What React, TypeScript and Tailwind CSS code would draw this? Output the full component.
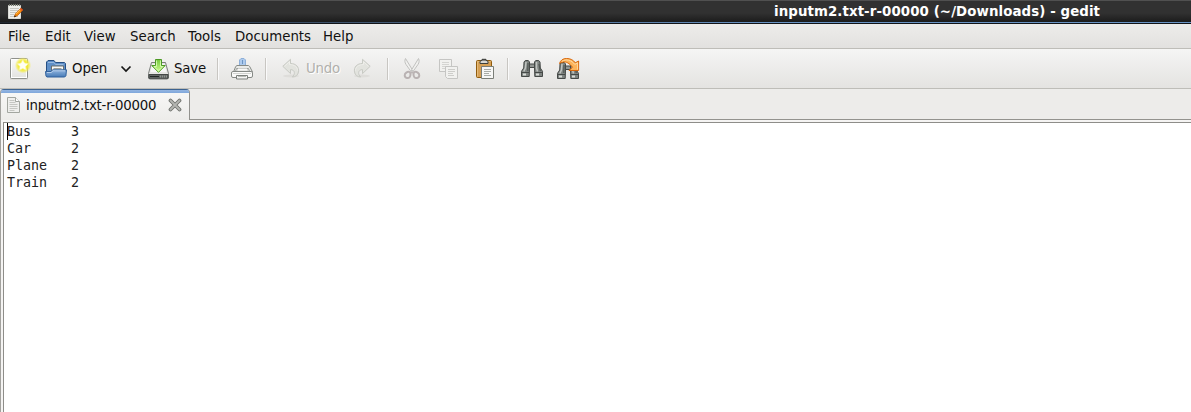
import type { ReactNode } from "react";

const rows = [
  ["Bus", "3"],
  ["Car", "2"],
  ["Plane", "2"],
  ["Train", "2"],
];

function Icon({ x, y = 56, children }: { x: number; y?: number; children: ReactNode }) {
  return (
    <svg className="block h-6 w-6 shrink-0" viewBox={`${x} ${y} 24 24`} fill="none" aria-hidden="true">
      {children}
    </svg>
  );
}

function Separator() {
  return <div className="mt-[2px] h-[22px] w-[2px] shrink-0 border-l border-[#c8c6c2] bg-[#fafafa]" />;
}

function NewIcon() {
  return (
    <Icon x={8}>
      <defs>
        <radialGradient id="glow">
          <stop offset="0.5" stopColor="#f4ec28" />
          <stop offset="0.75" stopColor="#f4ec4a" stopOpacity="0.7" />
          <stop offset="1" stopColor="#f7f080" stopOpacity="0" />
        </radialGradient>
        <linearGradient id="sheet" x2="0" y2="1">
          <stop stopColor="#fbfbfa" />
          <stop offset="1" stopColor="#e2e2df" />
        </linearGradient>
      </defs>
      <path d="M10 79h18" stroke="#cfcdca" />
      <rect x="10.5" y="58.5" width="17" height="20" rx="1" fill="url(#sheet)" stroke="#8f918c" />
      <rect x="11.5" y="59.5" width="15" height="18" stroke="#fff" />
      <circle cx="23" cy="65.3" r="8.3" fill="url(#glow)" />
      <path d="m22.8 59.8 1.8 3.2 3.7.7-2.6 2.7.4 3.7-3.3-1.5-3.4 1.5.5-3.7-2.6-2.7 3.7-.7z" fill="#fffff2" stroke="#f8f4a0" strokeWidth=".7" />
    </Icon>
  );
}

function OpenIcon() {
  return (
    <Icon x={44}>
      <defs>
        <linearGradient id="folder" x2="0" y2="1">
          <stop stopColor="#92b5df" />
          <stop offset="1" stopColor="#477bb7" />
        </linearGradient>
      </defs>
      <path d="M46.5 75V62l1.5-1.5h6l1.5 2h9l1 1V75z" fill="#5f8fc7" stroke="#264f83" />
      <path d="M48 62.5h6l1.5 2h8" stroke="#98b9e0" />
      <path d="M51.5 73v-7h12v7" fill="#f8f8f6" stroke="#6b6e6b" />
      <path d="M53.5 68.5h8M53.5 70.5h8" stroke="#9b9e9b" />
      <path d="M45.5 71.5H51l1.5-1.7h14l-.6 6-1.2 1.2H47l-1-.8z" fill="url(#folder)" stroke="#30619c" />
      <path d="M47 72.5h4.5l1.5-1.7h12" stroke="#b4cdeb" />
    </Icon>
  );
}

function SaveIcon() {
  return (
    <Icon x={146}>
      <defs>
        <linearGradient id="arrow" x2="0" y2="1">
          <stop stopColor="#73c63b" />
          <stop offset="1" stopColor="#d1ff91" />
        </linearGradient>
      </defs>
      <path d="m151.5 62.5-3 11v4.5l1 1h18l1-1v-4.5l-3-11z" fill="#e6e6e4" stroke="#7b7e7b" />
      <path d="M152.5 64h12l2 8h-16z" fill="#f7f7f6" />
      <path d="M149 74.5h19v3.8h-19z" fill="#656967" stroke="#444846" />
      <path d="M150 76.5h9" stroke="#222725" />
      <path d="M160.5 75.5v2m2-2v2m2-2v2m2-2v2" stroke="#a4a8a3" strokeWidth=".7" />
      <path d="M155.5 59.5h6v6h3.7l-6.7 6.8-6.8-6.8h3.8z" fill="url(#arrow)" stroke="#4c9924" />
      <path d="M156.5 60.5v6h-2.5l4.5 4.4 4.4-4.4h-2.4v-6" stroke="#e0ffc0" strokeWidth=".8" />
    </Icon>
  );
}

function PrintIcon() {
  return (
    <Icon x={230}>
      <path d="M239.5 66v-6l1.5-1.5h3l1.5 1.5v6z" fill="#adcaed" stroke="#8dafd8" />
      <path d="M242.5 60v4" stroke="#6c95c5" />
      <path d="m233.5 72 2.2-5.5 1.3-1h11.5l1.2 1 2.8 5.5" fill="#e9eae8" stroke="#858985" />
      <path d="M236.5 68.5h12l1.5 4h-15z" fill="#d9dbd8" stroke="#9ea19e" />
      <path d="M238 69.5h9" stroke="#f9f9f8" strokeWidth="2" />
      <rect x="231.5" y="71.5" width="21" height="6" rx="1.5" fill="#fafaf9" stroke="#858985" />
      <path d="M233 73.5h18" stroke="#d2d4d1" />
      <path d="M236.5 75.5h11v3.5h-11z" fill="#f4f4f3" stroke="#7d817d" />
      <path d="M238 76.5h8" stroke="#bcbfba" />
    </Icon>
  );
}

function CurvedArrow({ redo = false }: { redo?: boolean }) {
  return (
    <Icon x={279}>
      <g transform={redo ? "matrix(-1 0 0 1 582 0)" : undefined}>
        <ellipse cx="291" cy="76" rx="8" ry="1.5" fill="#deddda" />
        <path d="m282.8 66.3 7.7-7v4.2c5.5 0 8.8 3.5 8 8.4-.5 3.1-2.8 5-6.2 5.1 3-2.3 3-7.4-1.8-7.4v4z" fill="#e2e3de" stroke="#c8cac4" />
        <path d="m284.5 66.3 5-4.7v3c5 0 8 2.5 8 6" stroke="#eeeeea" />
      </g>
    </Icon>
  );
}

function CutIcon() {
  return (
    <Icon x={400}>
      <path d="M405.5 58.5c-1 2-.7 4 .4 5.8l5.1 7.2 1.2-2z" fill="#f1f1ef" stroke="#c1c1bf" />
      <path d="M418.5 58.5c1 2 .7 4-.4 5.8l-5.1 7.2-1.2-2z" fill="#f1f1ef" stroke="#c1c1bf" />
      <path d="M406.5 72.5c1.8-1.5 4-.8 4 1.8 0 2.7-1.5 4.2-3.6 3.7-2.8-.6-2.9-4.2-.4-5.5zM417.5 72.5c-1.8-1.5-4-.8-4 1.8 0 2.7 1.5 4.2 3.6 3.7 2.8-.6 2.9-4.2.4-5.5z" stroke="#b9b2b2" strokeWidth="2" />
      <path d="M410 72.5h4" stroke="#bcb6b6" strokeWidth="2" />
    </Icon>
  );
}

function CopyIcon() {
  return (
    <Icon x={436}>
      <path d="M439.5 59.5h12v12h-12z" fill="#f1f1ef" stroke="#c5c5c3" />
      <path d="M442 62.5h7m-7 2h7m-7 2h6m-6 2h5" stroke="#d4d4d1" />
      <path d="M445.5 66.5h12v12h-10l-2-2z" fill="#f1f1ef" stroke="#c5c5c3" />
      <path d="M448 69.5h7m-7 2h7m-7 2h5m-5 2h6" stroke="#cdcdca" />
    </Icon>
  );
}

function PasteIcon() {
  return (
    <Icon x={473}>
      <rect x="476.5" y="60.5" width="15" height="17" rx="1" fill="#d6a055" stroke="#915c0d" />
      <path d="M477.5 76.5v-15h13" stroke="#e4ba78" />
      <path d="M480 63.5v-2.2l2-1v-1h4v1l2 1v2.2z" fill="#d7d8d3" stroke="#3e403b" />
      <path d="M482 60h4" stroke="#333" />
      <path d="M481.5 66.5h12v12h-12z" fill="#f7f7f6" stroke="#7a7e77" />
      <path d="M484 69.5h7m-7 2h7m-7 2h5m-5 2h7" stroke="#a9aca7" />
    </Icon>
  );
}

function Binoculars() {
  return (
    <g>
      <path d="m524 62 1.3-1.5h3l1.2 1.5v6l-.3 8.5h-7.7v-5.2l2.2-3.3z" fill="#7f8481" stroke="#454947" />
      <path d="m540 62-1.3-1.5h-3l-1.2 1.5v6l.3 8.5h7.7v-5.2l-2.2-3.3z" fill="#7f8481" stroke="#454947" />
      <path d="M529.5 64h5v3.5h-5z" fill="#929693" stroke="#454947" />
      <path d="m526 62-.6 6-1.6 3.5M536.5 62v6l1 3.5" stroke="#c0c4c1" strokeWidth="1.5" />
      <path d="m528 63-.2 8M539 64l1.3 7" stroke="#505653" strokeWidth="1.2" />
      <path d="M522 72.5h7M535 72.5h7" stroke="#454947" />
      <path d="M523 74.5h3M536 74.5h3" stroke="#d8dbd8" strokeWidth="2" />
    </g>
  );
}

function FindIcon() {
  return <Icon x={520}><Binoculars /></Icon>;
}

function ReplaceIcon() {
  return (
    <Icon x={556}>
      <g transform="translate(36 2)"><Binoculars /></g>
      <path d="M559.5 63.5c1-3.3 3.5-5 7-5 4.3 0 6.8 1.6 8.8 4.3l3.3-1.8v9.5h-9.7l3.6-3.2c-3-4.2-6.5-5.7-9-5.3-1.6.2-3 .7-4 1.5z" fill="#fdb45b" stroke="#d96608" />
      <path d="M562 61.3c4-2.7 9.6-1.2 12.8 3.2l2.8-1.7v6.7" stroke="#ffd9a0" />
    </Icon>
  );
}

function EditorIcon() {
  return (
    <svg className="mt-1 block h-4 w-4 shrink-0" viewBox="8 4 16 16" fill="none" aria-hidden="true">
      <path d="M8.5 5.5h12v13h-12z" fill="#efefec" stroke="#dadbd5" />
      <path d="M9.5 4v2m2-2v2m2-2v2m2-2v2m2-2v2m2-2v2" stroke="#777b72" />
      <path d="M10 8.5h9m-9 2h8m-8 2h6m-6 2h4m-4 2h8" stroke="#c6c7c2" />
      <path d="m14.2 17 1.2-3.3 5.4-5.4 2 1.8-5.4 5.6z" fill="#f58b08" stroke="#ba560a" strokeWidth=".7" />
      <path d="m16 13.9 4.7-4.7" stroke="#ffc65b" />
      <path d="m20.3 8.6 2 1.8" stroke="#e65320" strokeWidth="1.7" />
      <path d="m14 17.2.8-2 1.3 1.2z" fill="#292010" />
    </svg>
  );
}

export default function App() {
  return (
    <div className="flex h-[412px] w-[1191px] flex-col overflow-hidden bg-[#edecea] font-['DejaVu_Sans',sans-serif] text-[13.333px] leading-4 text-[#111]">
      <header className="flex h-6 shrink-0 flex-col bg-linear-to-b from-[#313131] from-55% to-[#171717]">
        <div className="flex h-[22px] border-t border-[#505050] pl-2">
          <div className="-mt-px w-[766px]"><EditorIcon /></div>
          <h1 className="mt-[3px] whitespace-nowrap font-bold tracking-[0.1px] text-white">inputm2.txt-r-00000 (~/Downloads) - gedit</h1>
        </div>
        <div className="h-px bg-linear-to-r from-[#20262e] to-[#6893c5] to-65%" />
        <div className="h-px bg-[#111418]" />
      </header>

      <nav className="flex h-[25px] shrink-0 border-b border-[#bebdb8] bg-linear-to-b from-[#edecea] to-[#e2e1df] pl-2 pt-[5px]">
        <span className="w-[37px]">File</span>
        <span className="w-[39px]">Edit</span>
        <span className="w-[46px]">View</span>
        <span className="w-[58px]">Search</span>
        <span className="w-[47px]">Tools</span>
        <span className="w-[88px]">Documents</span>
        <span>Help</span>
      </nav>

      <div className="flex h-10 shrink-0 items-center border-b border-[#bebdb8] bg-linear-to-b from-[#f5f5f4] to-[#e4e3e1] pb-px pl-2 whitespace-nowrap">
        <div className="w-9"><NewIcon /></div>
        <div className="flex w-[76px] items-center gap-1"><OpenIcon /><span className="pt-[2px] tracking-[-0.1px]">Open</span></div>
        <svg className="mt-[2px] mr-[14px] h-3 w-3 shrink-0" viewBox="0 0 12 12" fill="none" aria-hidden="true">
          <path d="m1.5 3.5 4.5 4.5 4.5-4.5" stroke="#171717" strokeWidth="1.7" />
        </svg>
        <div className="flex w-[71px] items-center gap-1"><SaveIcon /><span className="pt-[2px] tracking-[-0.2px]">Save</span></div>
        <Separator />
        <div className="ml-[11px] w-[35px]"><PrintIcon /></div>
        <Separator />
        <div className="ml-3 flex w-[71px] items-center gap-[3px]">
          <CurvedArrow />
          <span className="pt-[2px] tracking-[-0.2px] text-[#b1b0ac] [text-shadow:1px_1px_0_#fff]">Undo</span>
        </div>
        <div className="w-[37px]"><CurvedArrow redo /></div>
        <Separator />
        <div className="ml-[11px] flex w-[107px] gap-3">
          <CutIcon />
          <CopyIcon />
          <div className="ml-px"><PasteIcon /></div>
        </div>
        <Separator />
        <div className="ml-[11px] flex gap-3"><FindIcon /><ReplaceIcon /></div>
      </div>

      <main className="flex min-h-0 flex-1 flex-col">
        <div className="flex h-[31px] shrink-0 items-end">
          <div className="flex h-[31px] w-[190px] shrink-0 flex-col rounded-t-[4px] border-t border-r border-l border-t-[#3d628f] border-r-[#93928e] border-l-[#a3a29e] bg-linear-to-b from-[#f8f8f7] to-[#edecea]">
            <div className="h-[3px] shrink-0 rounded-t-[2px] bg-linear-to-b from-[#94b5e0] to-[#7fa7dc]" />
            <div className="flex items-start pl-[6px] pt-[4px]">
              <svg className="mr-[5px] h-4 w-[14px] shrink-0" viewBox="0 0 14 16" fill="none" aria-hidden="true">
                <path d="M.5.5h8l4 4v11H.5z" fill="#efefed" stroke="#a3a6a0" />
                <path d="M8.5.5v4h4" fill="#fff" stroke="#a3a6a0" />
                <path d="M2.5 3.5h5m-5 2h6m-6 2h8m-8 2h8m-8 2h8m-8 2h5" stroke="#c5c6c2" />
              </svg>
              <span className="mt-px w-[142px] whitespace-nowrap tracking-[-0.25px]">inputm2.txt-r-00000</span>
              <svg className="mt-px h-[14px] w-[14px] shrink-0" viewBox="0 0 14 14" fill="none" aria-hidden="true">
                <path d="m2.5 2.5 9 9m0-9-9 9" stroke="#6f716d" strokeWidth="3.7" strokeLinecap="round" />
                <path d="m2.5 2.5 9 9m0-9-9 9" stroke="#b4b6b2" strokeWidth="1.8" strokeLinecap="round" />
              </svg>
            </div>
          </div>
          <div className="h-px flex-1 bg-[#93928e]" />
        </div>
        <div className="flex min-h-0 flex-1 border-l border-[#a3a29e] bg-[#f5f4f3] pl-[2px] pt-[2px]">
          <div className="flex-1 border-t border-l border-[#8e8d89] bg-white pl-[3px]">
            <div className="relative font-['DejaVu_Sans_Mono',monospace] leading-[17px] text-[#222]">
              {rows.map(([name, count]) => (
                <div className="flex h-[17px]" key={name}>
                  <span className="w-16">{name}</span>
                  <span>{count}</span>
                </div>
              ))}
              <div className="absolute top-0 left-0 h-[17px] w-px bg-black" />
            </div>
          </div>
        </div>
      </main>
    </div>
  );
}
